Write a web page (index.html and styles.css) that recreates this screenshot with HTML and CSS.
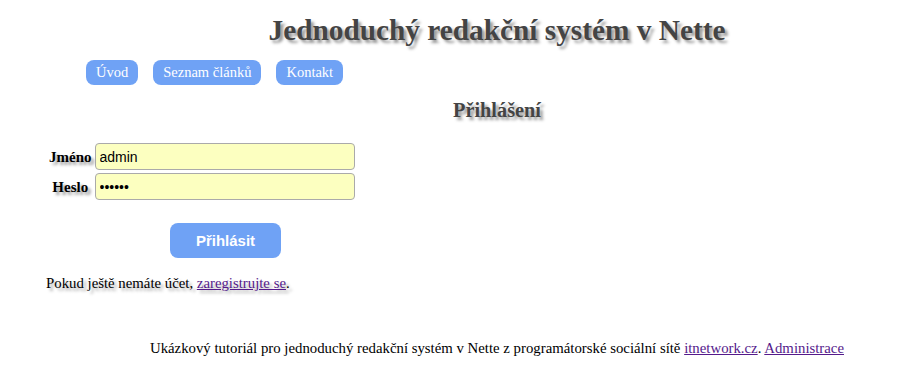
FILE: index.html
```html
<!DOCTYPE html>
<html lang="cs">
<head>
<meta charset="utf-8">
<title>Přihlášení</title>
<link rel="stylesheet" href="styles.css">
</head>
<body>
<header class="header">
  <h1 class="title">Jednoduchý redakční systém v Nette</h1>
  <nav class="menu">
    <a class="menu-item" href="#">Úvod</a>
    <a class="menu-item" href="#">Seznam článků</a>
    <a class="menu-item" href="#">Kontakt</a>
  </nav>
</header>
<main class="content">
  <h2 class="subtitle">Přihlášení</h2>
  <form class="login">
    <table class="login-table">
      <tr>
        <th class="label"><label for="name">Jméno</label></th>
        <td><input class="field" id="name" type="text" value="admin"></td>
      </tr>
      <tr>
        <th class="label"><label for="pass">Heslo</label></th>
        <td><input class="field" id="pass" type="password" value="123456"></td>
      </tr>
      <tr>
        <th></th>
        <td class="submit-cell"><button class="submit" type="button">Přihlásit</button></td>
      </tr>
    </table>
  </form>
  <p class="note">Pokud ještě nemáte účet, <a class="link" href="#">zaregistrujte se</a>.</p>
</main>
<footer class="footer">
  Ukázkový tutoriál pro jednoduchý redakční systém v Nette z programátorské sociální sítě <a class="link" href="#">itnetwork.cz</a>. <a class="link" href="#">Administrace</a>
</footer>
</body>
</html>
```
FILE: styles.css
```css
html, body {
  margin: 0;
  padding: 0;
  background: #fff;
}
body {
  font-family: "Liberation Serif", "Times New Roman", serif;
  font-size: 14.8px;
  color: #000;
}
.header {
  padding-top: 12px;
}
.title {
  margin: 0;
  padding-left: 83px;
  text-align: center;
  font-size: 29.3px;
  line-height: 36px;
  font-weight: bold;
  color: #444;
  text-shadow: 3px 3px 3px #999;
}
.menu {
  display: flex;
  gap: 15px;
  margin-left: 86px;
  margin-top: 12px;
}
.menu-item {
  display: block;
  background: #6fa2f5;
  color: #fff;
  text-decoration: none;
  font-size: 14.5px;
  line-height: 25px;
  padding: 0 10px;
  border-radius: 8px;
}
.content {
  padding-left: 46px;
}
.subtitle {
  margin: 10px 0 0 0;
  padding-left: 37px;
  text-align: center;
  font-size: 20.3px;
  line-height: 30px;
  color: #444;
  text-shadow: 3px 3px 3px #999;
}
.login {
  margin-top: 17px;
}
.login-table {
  border-collapse: collapse;
}
.login-table td, .login-table th {
  padding: 0;
}
.label {
  text-align: center;
  font-size: 15px;
  font-weight: bold;
  padding-right: 3px !important;
  padding-left: 3px !important;
  text-shadow: 3px 3px 3px #999;
}
.field {
  display: block;
  box-sizing: border-box;
  width: 260px;
  height: 27px;
  margin: 1px 0 2px;
  padding: 0 4px;
  background: #fcffc0;
  border: 1px solid #aaa;
  border-radius: 4px;
  font-family: "Liberation Sans", Arial, sans-serif;
  font-size: 14px;
  color: #000;
}
.submit-cell {
  text-align: center;
  padding-top: 21px !important;
}
.submit {
  width: 111px;
  height: 35px;
  margin-left: 2px;
  background: #6fa2f5;
  color: #fff;
  border: none;
  border-radius: 8px;
  font-family: "Liberation Sans", Arial, sans-serif;
  font-size: 15px;
  font-weight: bold;
}
.note {
  margin: 15px 0 0;
  line-height: 20px;
  text-shadow: 3px 3px 3px #aaa;
}
.link {
  color: #551a8b;
}
.footer {
  margin-top: 45px;
  padding-right: 67px;
  text-align: right;
  line-height: 20px;
}
```
